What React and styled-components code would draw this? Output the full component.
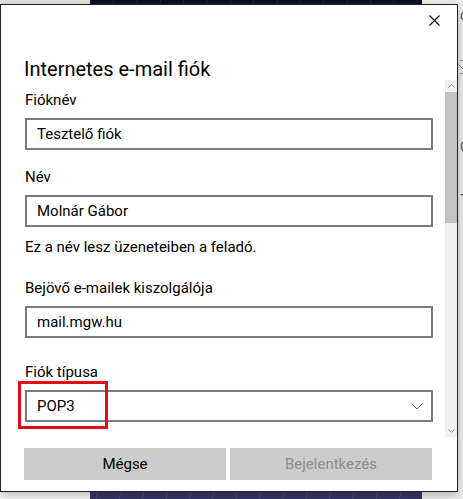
import React from 'react';
import styled, { createGlobalStyle } from 'styled-components';

const GlobalStyle = createGlobalStyle`
  html, body {
    margin: 0;
    padding: 0;
    overflow: hidden;
    background: #f0f0f0;
  }
  * {
    box-sizing: border-box;
  }
`;

const fields = [
  { label: 'Fióknév', value: 'Tesztelő fiók', space: 17 },
  { label: 'Név', value: 'Molnár Gábor', hint: 'Ez a név lesz üzeneteiben a feladó.', space: 21 },
  { label: 'Bejövő e-mailek kiszolgálója', value: 'mail.mgw.hu', space: 24 },
];

const App = () => (
  <>
    <GlobalStyle />
    <Desktop>
      <LeftPane />
      <Wallpaper />
      <RightPane>
        <Glyph $top={8}>ó</Glyph>
        <PeekSelect>
          <svg width="10" height="6" viewBox="0 0 10 6">
            <path d="M0.5 0.5 L5 5 L9.5 0.5" fill="none" stroke="#777" strokeWidth="1" />
          </svg>
        </PeekSelect>
        <Glyph $top={66}>G</Glyph>
        <Glyph $top={34}>+</Glyph>
      </RightPane>

      <Dialog>
        <CloseRow>
          <CloseButton aria-label="Bezárás">
            <svg width="11" height="11" viewBox="0 0 11 11">
              <path d="M0.5 0.5 L10.5 10.5 M10.5 0.5 L0.5 10.5" stroke="#000" strokeWidth="1.1" />
            </svg>
          </CloseButton>
        </CloseRow>

        <Body>
          <Main>
            <Title>Internetes e-mail fiók</Title>
            {fields.map((f) => (
              <Field key={f.label} $space={f.space}>
                <Label>{f.label}</Label>
                <TextBox>{f.value}</TextBox>
                {f.hint && <Hint>{f.hint}</Hint>}
              </Field>
            ))}
            <Field $space={0}>
              <Label>Fiók típusa</Label>
              <SelectBox>
                <span>POP3</span>
                <svg width="12" height="7" viewBox="0 0 12 7">
                  <path d="M0.5 0.5 L6 6 L11.5 0.5" fill="none" stroke="#6b6b6b" strokeWidth="1" />
                </svg>
                <Highlight />
              </SelectBox>
            </Field>
          </Main>

          <Scrollbar>
            <ScrollArrow>
              <svg width="7" height="4" viewBox="0 0 7 4">
                <path d="M0.5 3.5 L3.5 0.5 L6.5 3.5" fill="none" stroke="#9a9a9a" strokeWidth="1" />
              </svg>
            </ScrollArrow>
            <Thumb />
            <TrackRest />
            <ScrollArrow>
              <svg width="7" height="4" viewBox="0 0 7 4">
                <path d="M0.5 0.5 L3.5 3.5 L6.5 0.5" fill="none" stroke="#9a9a9a" strokeWidth="1" />
              </svg>
            </ScrollArrow>
          </Scrollbar>
        </Body>

        <Footer>
          <Button>Mégse</Button>
          <Button disabled>Bejelentkezés</Button>
        </Footer>
      </Dialog>
    </Desktop>
  </>
);

export default App;

const Desktop = styled.div`
  position: relative;
  width: 463px;
  height: 499px;
  display: flex;
  overflow: hidden;
  font-family: "Segoe UI", Roboto, "Noto Sans", sans-serif;
`;

const LeftPane = styled.div`
  width: 90px;
  background: linear-gradient(to bottom, #e4e4e4 0, #e4e4e4 6px, #f7f7f7 480px, #fafafa 100%);
`;

const Wallpaper = styled.div`
  width: 332px;
  background:
    repeating-linear-gradient(100deg, rgba(255, 255, 255, 0.07) 0 1px, transparent 1px 23px),
    linear-gradient(to bottom, #0a1028 0%, #1b2150 55%, #3b3668 100%);
`;

const RightPane = styled.div`
  flex: 1;
  display: flex;
  flex-direction: column;
  padding-left: 38px;
  background: #f0f0f0;
  overflow: hidden;
`;

const Glyph = styled.span`
  margin-top: ${(p) => p.$top}px;
  font-size: 14px;
  line-height: 14px;
  color: #555;
`;

const PeekSelect = styled.div`
  margin-top: 38px;
  height: 14px;
  width: 30px;
  border-top: 1px solid #999;
  border-bottom: 1px solid #999;
  display: flex;
  align-items: center;

  svg {
    margin-left: -2px;
  }
`;

const Dialog = styled.div`
  position: absolute;
  left: 0;
  top: 4px;
  width: 458px;
  height: 488px;
  background: #fff;
  border: 1px solid #222;
  box-shadow: 0 3px 10px rgba(0, 0, 0, 0.28);
  display: flex;
  flex-direction: column;
`;

const CloseRow = styled.div`
  height: 30px;
  display: flex;
  justify-content: flex-end;
  align-items: center;
  padding-right: 17px;
`;

const CloseButton = styled.button`
  border: 0;
  padding: 0;
  background: none;
  display: flex;
  cursor: pointer;
`;

const Body = styled.div`
  display: flex;
  align-items: flex-start;
`;

const Main = styled.div`
  width: 444px;
  padding-left: 24px;
  padding-right: 12px;
  display: flex;
  flex-direction: column;
`;

const Title = styled.h1`
  margin: 20px 0 7px -1px;
  font-size: 20px;
  line-height: 28px;
  font-weight: 400;
  color: #000;
`;

const Field = styled.div`
  display: flex;
  flex-direction: column;
  margin-bottom: ${(p) => p.$space}px;
`;

const Label = styled.div`
  font-size: 15px;
  line-height: 20px;
  color: #000;
  margin-bottom: 8px;
`;

const TextBox = styled.div`
  height: 32px;
  border: 2px solid #7a7a7a;
  padding: 0 10px;
  display: flex;
  align-items: center;
  font-size: 15px;
  color: #000;
`;

const Hint = styled.div`
  margin-top: 10px;
  font-size: 15px;
  line-height: 20px;
  color: #000;
`;

const SelectBox = styled.div`
  position: relative;
  height: 32px;
  border: 2px solid #7a7a7a;
  padding: 0 8px 0 10px;
  display: flex;
  align-items: center;
  justify-content: space-between;
  font-size: 15px;
  color: #000;
`;

const Highlight = styled.div`
  position: absolute;
  left: -9px;
  top: -11px;
  width: 90px;
  height: 48px;
  border: 3px solid #e10e17;
  pointer-events: none;
`;

const Scrollbar = styled.div`
  width: 12px;
  margin-top: 45px;
  height: 357px;
  background: #f0f0f0;
  display: flex;
  flex-direction: column;
  align-items: center;
`;

const ScrollArrow = styled.div`
  height: 12px;
  display: flex;
  align-items: center;
  justify-content: center;
`;

const Thumb = styled.div`
  width: 100%;
  height: 131px;
  background: #c2c2c2;
`;

const TrackRest = styled.div`
  flex: 1;
`;

const Footer = styled.div`
  margin-top: 11px;
  padding: 0 23px;
  display: grid;
  grid-template-columns: 202px 202px;
  gap: 4px;
`;

const Button = styled.button`
  height: 32px;
  border: 0;
  background: #cccccc;
  font-family: inherit;
  font-size: 15px;
  color: ${(p) => (p.disabled ? '#8c8c8c' : '#000')};
  padding: 0;
`;
